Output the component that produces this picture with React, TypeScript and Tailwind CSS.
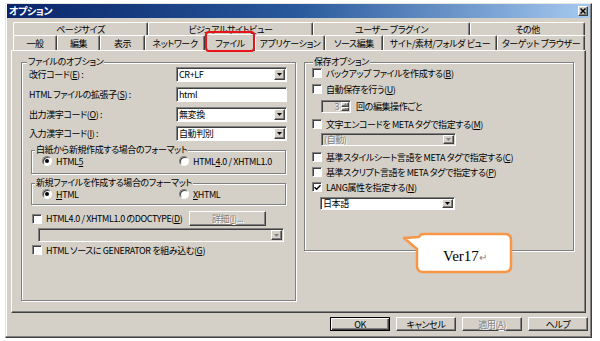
import React from 'react';

const sunken =
  'border border-t-[#808080] border-l-[#808080] border-b-white border-r-white shadow-[inset_1px_1px_0_#404040]';
const raised =
  'border border-t-white border-l-white border-b-[#404040] border-r-[#404040] shadow-[inset_-1px_-1px_0_#808080]';
const dim = 'text-[#808080] [text-shadow:1px_1px_0_#fff]';

const topTabs = [
  { label: 'ページサイズ', w: 'w-[135px]' },
  { label: 'ビジュアルサイトビュー', w: 'w-[165px]' },
  { label: 'ユーザー プラグイン', w: 'w-[157px]' },
  { label: 'その他', w: 'w-[115px]' },
];

const frontTabs = [
  { label: '一般', w: 'w-[44px]' },
  { label: '編集', w: 'w-[43px]' },
  { label: '表示', w: 'w-[45px]' },
  { label: 'ネットワーク', w: 'w-[60px]' },
  { label: 'ファイル', w: 'w-[50px]', selected: true },
  { label: 'アプリケーション', w: 'w-[70px]' },
  { label: 'ソース編集', w: 'w-[58px]' },
  { label: 'サイト/素材/フォルダ ビュー', w: 'w-[114px]' },
  { label: 'ターゲット ブラウザー', w: 'w-[88px]' },
];

const Arrow = ({ disabled }: { disabled?: boolean }) => (
  <span className={`w-[11px] h-full shrink-0 bg-[#d4d0c8] flex items-center justify-center ${raised}`}>
    <svg width="5" height="3" viewBox="0 0 5 3">
      <path d="M0 0H5L2.5 3Z" fill={disabled ? '#808080' : '#000'} />
    </svg>
  </span>
);

const Combo = ({ value, w, h = 'h-[15px]', disabled }: { value?: string; w: string; h?: string; disabled?: boolean }) => (
  <div className={`${w} ${h} shrink-0 flex p-[1px] ${sunken} ${disabled ? 'bg-[#d4d0c8]' : 'bg-white'}`}>
    <span className={`flex-1 pl-[1px] flex items-center whitespace-nowrap ${disabled ? dim : ''}`}>{value}</span>
    <Arrow disabled={disabled} />
  </div>
);

const Check = ({ checked }: { checked?: boolean }) => (
  <span className={`w-[10px] h-[10px] shrink-0 bg-white flex items-center justify-center ${sunken}`}>
    {checked && (
      <svg width="7" height="7" viewBox="0 0 7 7" className="ml-[1px] mt-[1px]">
        <path d="M0.5 3.2L2.6 5.3L6.5 1.2" stroke="#000" strokeWidth="1.4" fill="none" />
      </svg>
    )}
  </span>
);

const Radio = ({ checked }: { checked?: boolean }) => (
  <span className="w-[10px] h-[10px] shrink-0 rounded-full bg-white border border-t-[#808080] border-l-[#808080] border-b-white border-r-white shadow-[inset_1px_1px_0_#404040] flex items-center justify-center">
    {checked && <span className="w-[4px] h-[4px] rounded-full bg-black" />}
  </span>
);

const CheckRow = ({ children, checked, className }: { children: React.ReactNode; checked?: boolean; className?: string }) => (
  <div className={`flex items-center h-[12px] ${className}`}>
    <Check checked={checked} />
    <span className="ml-[4px] whitespace-nowrap">{children}</span>
  </div>
);

const Group = ({
  title,
  titleMl,
  className,
  children,
}: {
  title: string;
  titleMl: string;
  className: string;
  children: React.ReactNode;
}) => (
  <div className={`shrink-0 flex flex-col border border-[#808080] shadow-[inset_1px_1px_0_#fff,1px_1px_0_#fff] ${className}`}>
    <div className={`-mt-[7px] ${titleMl} px-[1px] h-[11px] leading-[11px] bg-[#d4d0c8] w-fit whitespace-nowrap`}>{title}</div>
    {children}
  </div>
);

const Field = ({ label, children, className }: { label: React.ReactNode; children: React.ReactNode; className: string }) => (
  <div className={`flex items-center h-[15px] ml-[7px] ${className}`}>
    <span className="w-[147px] whitespace-nowrap">{label}</span>
    {children}
  </div>
);

const RadioPair = ({ a, b }: { a: React.ReactNode; b: React.ReactNode }) => (
  <div className="flex items-center h-[12px] pl-[10px] whitespace-nowrap">
    <div className="w-[137px] flex items-center">
      <Radio checked />
      <span className="ml-[4px]">{a}</span>
    </div>
    <Radio />
    <span className="ml-[4px]">{b}</span>
  </div>
);

const Button = ({ children, primary, disabled }: { children: React.ReactNode; primary?: boolean; disabled?: boolean }) => (
  <div
    className={`w-[60px] h-[14px] flex items-center justify-center ${
      primary
        ? 'border border-black shadow-[inset_1px_1px_0_#fff,inset_-1px_-1px_0_#404040,inset_-2px_-2px_0_#808080]'
        : raised
    } ${disabled ? dim : ''}`}
  >
    {children}
  </div>
);

const tabBase =
  'flex items-center justify-center whitespace-nowrap rounded-t-[2px] border-t border-l border-r border-t-white border-l-white border-r-[#404040] shadow-[inset_-1px_0_0_#808080]';

export default function App() {
  return (
    <div className="relative w-[600px] h-[341px] overflow-hidden bg-white pl-[5px] pt-[3px] text-[9px] leading-[11px] tracking-[-0.4px] text-black font-['Noto_Sans_CJK_JP','Noto_Sans',sans-serif] [font-feature-settings:'palt']">
      <div className="w-[587px] h-[335px] flex flex-col bg-[#d4d0c8] border border-[#404040] border-l-[#e8e6e0] border-t-[#e8e6e0] shadow-[inset_-1px_-1px_0_#808080,inset_1px_1px_0_#fff]">
        {/* title bar */}
        <div className="mx-[1px] h-[14px] flex items-center justify-between bg-linear-to-r from-[#0a246a] via-[#2a5a9c] to-[#a6caf0] pl-[2px] pr-[2px]">
          <span className="text-white font-bold text-[10px] leading-[12px]">オプション</span>
          <span className={`w-[10px] h-[10px] bg-[#d4d0c8] flex items-center justify-center ${raised}`}>
            <svg width="6" height="6" viewBox="0 0 6 6">
              <path d="M0.5 0.5L5.5 5.5M5.5 0.5L0.5 5.5" stroke="#000" strokeWidth="1.5" />
            </svg>
          </span>
        </div>

        {/* tabs */}
        <div className="mt-[4px] ml-[7px] flex flex-col">
          <div className="flex h-[13px]">
            {topTabs.map((t) => (
              <div key={t.label} className={`${t.w} h-[13px] ${tabBase}`}>
                {t.label}
              </div>
            ))}
          </div>
          <div className="flex h-[15px] items-end">
            {frontTabs.map((t) =>
              t.selected ? (
                <div key={t.label} className={`${t.w} relative z-10 h-[17px] -mb-[1px] bg-[#d4d0c8] ${tabBase}`}>
                  {t.label}
                </div>
              ) : (
                <div key={t.label} className={`${t.w} h-[15px] ${tabBase}`}>
                  {t.label}
                </div>
              )
            )}
          </div>
        </div>

        {/* tab page */}
        <div className={`ml-[5px] w-[575px] h-[263px] flex items-start gap-[8px] pl-[9px] pt-[11px] ${raised}`}>
          <Group title="ファイルのオプション" titleMl="ml-[5px]" className="w-[275px] h-[239px]">
            <Field label={<>改行コード(<u>E</u>) :</>} className="mt-0">
              <Combo value="CR+LF" w="w-[111px]" />
            </Field>
            <Field label={<>HTML ファイルの拡張子(<u>S</u>) :</>} className="mt-[5px]">
              <div className={`w-[111px] h-[15px] bg-white pl-[2px] flex items-center ${sunken}`}>html</div>
            </Field>
            <Field label={<>出力漢字コード(<u>O</u>) :</>} className="mt-[5px]">
              <Combo value="無変換" w="w-[111px]" />
            </Field>
            <Field label={<>入力漢字コード(<u>I</u>) :</>} className="mt-[4px]">
              <Combo value="自動判別" w="w-[111px]" />
            </Field>

            <Group title="白紙から新規作成する場合のフォーマット" titleMl="ml-[3px]" className="mt-[9px] ml-[9px] w-[255px] h-[24px]">
              <RadioPair
                a={<>HTML<u>5</u></>}
                b={<>HTML<u>4</u>.0 / XHTML1.0</>}
              />
            </Group>
            <Group title="新規ファイルを作成する場合のフォーマット" titleMl="ml-[3px]" className="mt-[9px] ml-[9px] w-[255px] h-[22px]">
              <RadioPair a={<><u>H</u>TML</>} b={<><u>X</u>HTML</>} />
            </Group>

            <div className="mt-[6px] ml-[10px] h-[15px] flex items-center">
              <div className="w-[157px] flex items-center">
                <Check />
                <span className="ml-[4px] whitespace-nowrap">
                  HTML4.0 / XHTML1.0 のDOCTYPE(<u>D</u>)
                </span>
              </div>
              <div className={`w-[77px] h-[15px] flex items-center justify-center ${raised} ${dim}`}>詳細(<u>I</u>)...</div>
            </div>
            <div className="mt-[2px] ml-[16px]">
              <Combo w="w-[246px]" h="h-[14px]" disabled />
            </div>
            <CheckRow className="mt-[2px] ml-[10px]">
              HTML ソースに GENERATOR を組み込む(<u>G</u>)
            </CheckRow>
          </Group>

          <Group title="保存オプション" titleMl="ml-[8px]" className="w-[270px] h-[189px]">
            <CheckRow className="mt-0 ml-[7px]">
              バックアップ ファイルを作成する(<u>B</u>)
            </CheckRow>
            <CheckRow className="mt-[4px] ml-[7px]">
              自動保存を行う(<u>U</u>)
            </CheckRow>
            <div className="mt-[5px] ml-[16px] h-[13px] flex items-center">
              <div className={`w-[30px] h-[13px] flex bg-[#d4d0c8] p-[1px] ${sunken}`}>
                <span className={`flex-1 text-right pr-[2px] leading-[10px] ${dim}`}>3</span>
                <span className="w-[8px] flex flex-col">
                  <span className={`flex-1 bg-[#d4d0c8] flex items-center justify-center ${raised}`}>
                    <svg width="3" height="2" viewBox="0 0 3 2"><path d="M0 2H3L1.5 0Z" fill="#808080" /></svg>
                  </span>
                  <span className={`flex-1 bg-[#d4d0c8] flex items-center justify-center ${raised}`}>
                    <svg width="3" height="2" viewBox="0 0 3 2"><path d="M0 0H3L1.5 2Z" fill="#808080" /></svg>
                  </span>
                </span>
              </div>
              <span className="ml-[5px] whitespace-nowrap">回の編集操作ごと</span>
            </div>
            <CheckRow className="mt-[5px] ml-[7px]">
              文字エンコードを META タグで指定する(<u>M</u>)
            </CheckRow>
            <div className="mt-[3px] ml-[16px]">
              <Combo value="(自動)" w="w-[135px]" h="h-[13px]" disabled />
            </div>
            <CheckRow className="mt-[5px] ml-[7px]">
              基準スタイルシート言語を META タグで指定する(<u>C</u>)
            </CheckRow>
            <CheckRow className="mt-[3px] ml-[7px]">
              基準スクリプト言語を META タグで指定する(<u>P</u>)
            </CheckRow>
            <CheckRow checked className="mt-[3px] ml-[7px]">
              LANG属性を指定する(<u>N</u>)
            </CheckRow>
            <div className="mt-[4px] ml-[15px]">
              <Combo value="日本語" w="w-[135px]" h="h-[13px]" />
            </div>
          </Group>
        </div>

        {/* buttons */}
        <div className="mt-[4px] pr-[3px] flex justify-end gap-[6px]">
          <Button primary>OK</Button>
          <Button>キャンセル</Button>
          <Button disabled>
            適用(<u>A</u>)
          </Button>
          <Button>ヘルプ</Button>
        </div>
      </div>

      {/* highlight on the selected tab */}
      <div className="absolute z-20 left-[205px] top-[31px] w-[50px] h-[21px] border-2 border-[#e8141b] rounded-[4px]" />

      {/* callout */}
      <div className="absolute z-20 left-[400px] top-[230px] w-[116px] h-[46px] tracking-normal">
        <svg width="116" height="46" viewBox="0 0 116 46" className="absolute inset-0">
          <path
            d="M24 4H105Q111 4 111 10V36Q111 42 105 42H23Q17 42 17 36V19L4 8L19 7Q20 4 24 4Z"
            fill="#fff"
            stroke="#f79646"
            strokeWidth="2.5"
            strokeLinejoin="round"
          />
        </svg>
        <div className="absolute left-[43px] top-[18px] flex items-end font-['Liberation_Serif',serif] text-[15px] leading-[16px]">
          Ver17<span className="text-[10px] leading-[12px] text-[#7f7f7f]">↵</span>
        </div>
      </div>
    </div>
  );
}
